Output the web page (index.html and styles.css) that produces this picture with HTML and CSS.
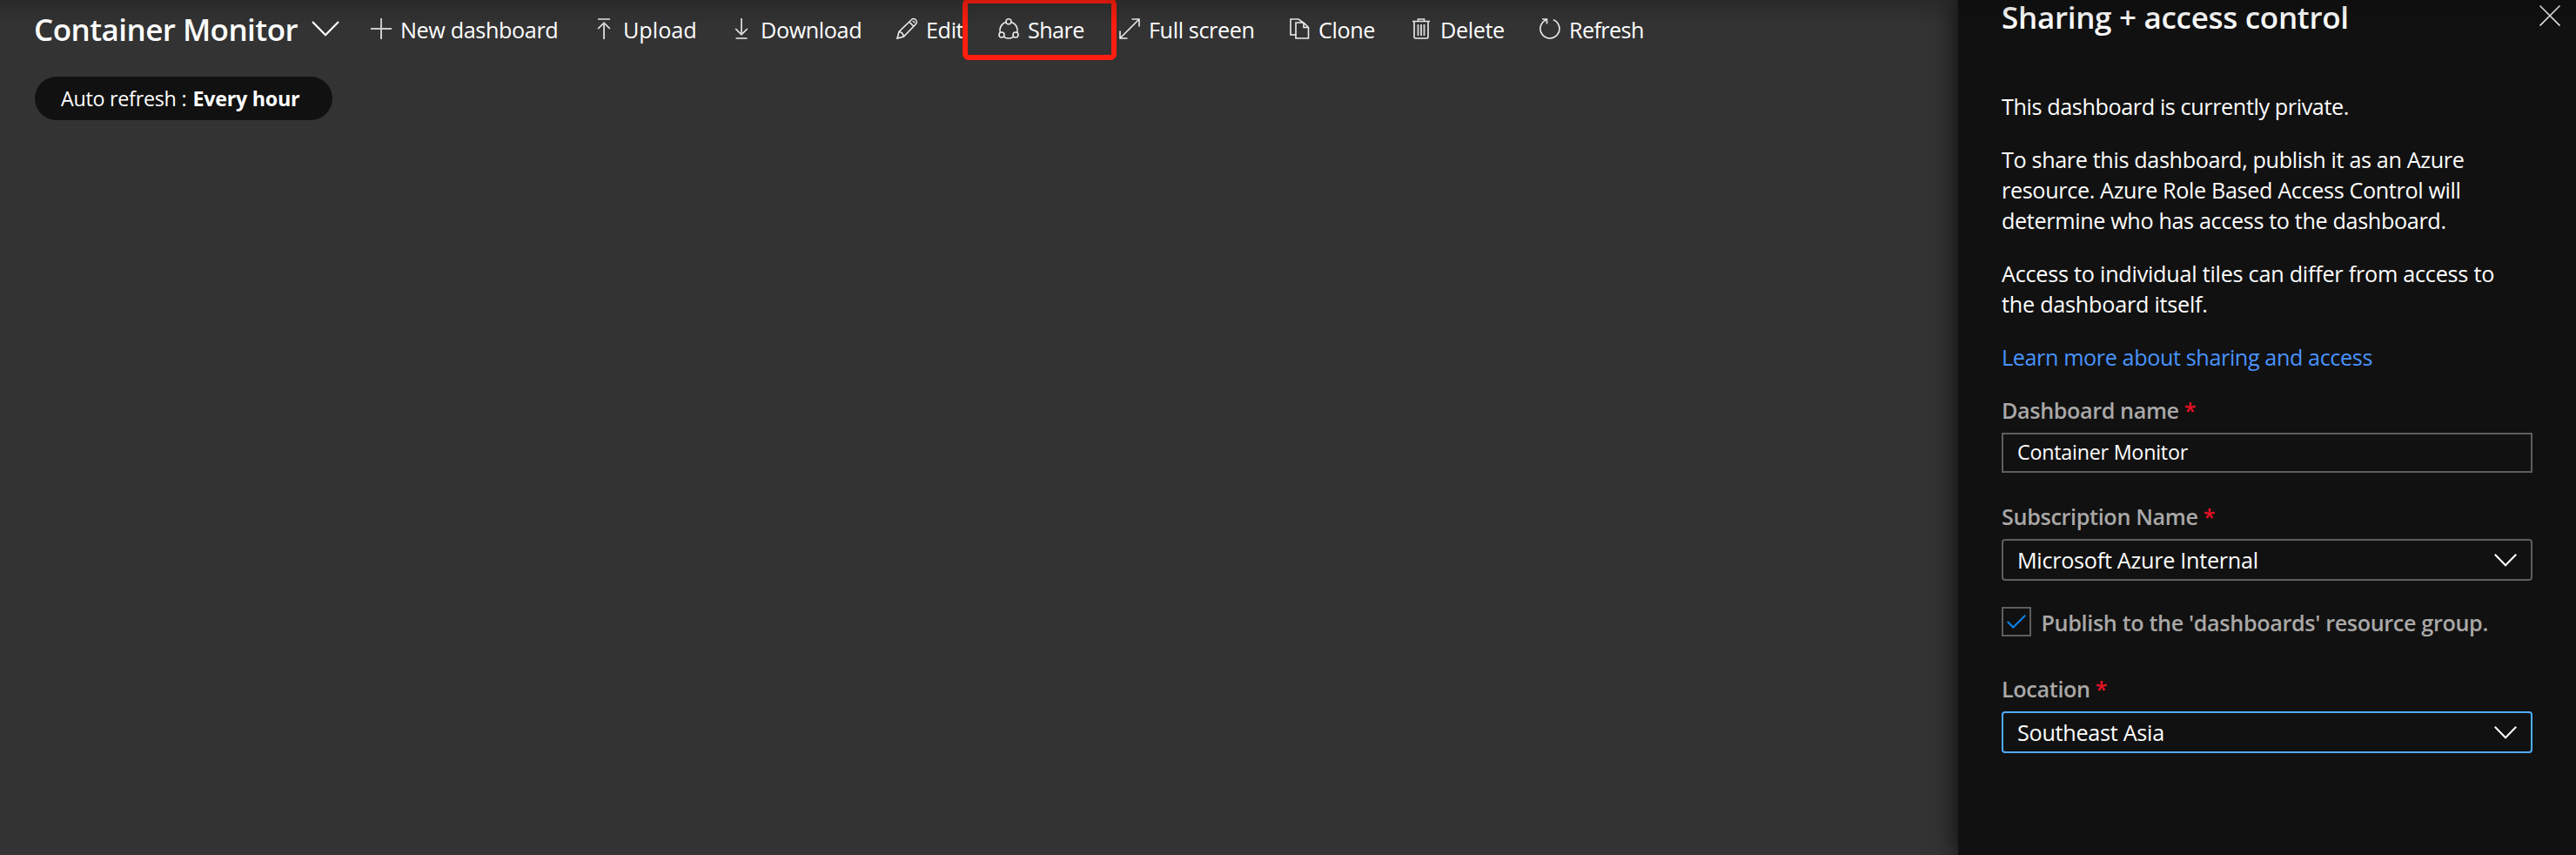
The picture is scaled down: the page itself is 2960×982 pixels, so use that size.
FILE: index.html
```
<!DOCTYPE html>
<html lang="en">
<head>
<meta charset="utf-8">
<title>Container Monitor</title>
<link rel="stylesheet" href="styles.css">
</head>
<body>
<div class="portal">
  <main class="dashboard">
    <header class="topbar">
      <h1 class="title">Container Monitor</h1>
      <svg class="title-chevron" viewBox="0 0 32 18"><path d="M1 1l15 15.200L31 1"/></svg>
      <nav class="toolbar">
        <button class="tool"><svg class="icon soft" viewBox="0 0 24 24"><path d="M12 0v24M0 12h24"/></svg><span>New dashboard</span></button>
        <button class="tool upload"><svg class="icon" viewBox="0 0 24 24"><path d="M5 1h14M5.200 12L12 5.200l6.800 6.800"/><path class="soft" d="M12 5v19"/></svg><span>Upload</span></button>
        <button class="tool"><svg class="icon" viewBox="0 0 24 24"><path d="M5.500 23h13M5.200 12L12 18.800l6.800-6.800"/><path class="soft" d="M12 0v19"/></svg><span>Download</span></button>
        <button class="tool"><svg class="icon" viewBox="0 0 24 24"><path d="M1 23l2-7.500L17.200 1.700a3.600 3.600 0 0 1 5.100 5.100L8.500 21zM3 15.500q4.500.5 5.500 5.500M14.800 4.100l5.100 5.100M18.600 3.200q2 .3 2.300 2.300"/></svg><span>Edit</span></button>
        <button class="tool share"><svg class="icon" viewBox="0 0 24 24"><circle cx="12" cy="3.700" r="3"/><circle cx="4" cy="19" r="3"/><circle cx="20" cy="19" r="3"/><path d="M9 4.200A10.200 10.200 0 0 0 2.200 16.500M15 4.200a10.200 10.200 0 0 1 6.800 12.300M6.700 21.600a11 11 0 0 0 10.600 0"/></svg><span>Share</span></button>
        <button class="tool"><svg class="icon" viewBox="0 0 24 24"><path d="M1 23L23 1M14.500 1H23v8.500M1 14.500V23h8.500"/></svg><span>Full screen</span></button>
        <button class="tool"><svg class="icon" viewBox="0 0 24 24"><path d="M7.500 19H2V1h9l5.500 4M8 5h9l5.500 5.500V23H8zM17 5v5.500h5.500"/></svg><span>Clone</span></button>
        <button class="tool"><svg class="icon" viewBox="0 0 24 24"><path d="M2 3.500h20M8.500 3.500V1h7v2.500M4 3.500v18q0 1.500 1.500 1.500h13q1.500 0 1.500-1.500v-18"/><path class="soft" d="M8.500 7v13M12 7v13M15.500 7v13"/></svg><span>Delete</span></button>
        <button class="tool refresh"><svg class="icon" viewBox="0 0 24 24"><path d="M15.800 1.700A11 11 0 1 1 8 1.700M3 1h5.500v5.500"/></svg><span>Refresh</span></button>
      </nav>
    </header>
    <div class="pill"><span>Auto refresh</span><span class="colon">:</span><b>Every hour</b></div>
  </main>
  <aside class="panel">
    <header class="panel-head">
      <h2 class="panel-title">Sharing + access control</h2>
      <svg class="close" viewBox="0 0 24 24"><path d="M.5.5l23 23M23.500.5l-23 23"/></svg>
    </header>
    <p>This dashboard is currently private.</p>
    <p class="publish">To share this dashboard, publish it as an Azure<br>resource. Azure Role Based Access Control will<br>determine who has access to the dashboard.</p>
    <p class="tiles">Access to individual tiles can differ from access to<br>the dashboard itself.</p>
    <p class="more"><a class="link">Learn more about sharing and access</a></p>
    <div class="field name">
      <label>Dashboard name<i>*</i></label>
      <div class="input">Container Monitor</div>
    </div>
    <div class="field subscription">
      <label>Subscription Name<i>*</i></label>
      <div class="select"><span>Microsoft Azure Internal</span><svg class="chevron" viewBox="0 0 26 15"><path d="M.8.8L13 13.300 25.200.8"/></svg></div>
    </div>
    <div class="check">
      <div class="box"><svg viewBox="0 0 22 16"><path d="M.8 8l6.500 6.500L21.200.8"/></svg></div>
      <span>Publish to the 'dashboards' resource group.</span>
    </div>
    <div class="field location">
      <label>Location<i>*</i></label>
      <div class="select focused"><span>Southeast Asia</span><svg class="chevron" viewBox="0 0 26 15"><path d="M.8.8L13 13.300 25.200.8"/></svg></div>
    </div>
  </aside>
  <div class="top-shade"></div>
</div>
</body>
</html>
```
FILE: styles.css
```
*, *::after { box-sizing: border-box; }
body {
  margin: 0;
  background: #333;
  color: #fff;
  font: 25.2px/35px "Open Sans", "Noto Sans", sans-serif;
  letter-spacing: -0.4px;
}
h1, h2, p { margin: 0; }
svg { display: block; flex: none; fill: none; stroke: #fff; stroke-width: 1.8; overflow: visible; }
span, b, h1, h2, label { white-space: nowrap; }

.portal { display: flex; width: 2960px; height: 982px; position: relative; overflow: hidden; }
.dashboard { flex: 1; padding-left: 40px; }

.topbar { display: flex; align-items: center; height: 68px; margin-left: -1px; }
.title { width: 319px; font-size: 35px; font-weight: 600; line-height: 48px; letter-spacing: -0.54px; }
.title-chevron { width: 32px; height: 18px; margin: 0 36px 2px 0; stroke-width: 2.2; }
.toolbar { display: grid; grid-template-columns: 256px 158px 190px 117px 139px 195px 140px 148px 140px; }
.tool {
  position: relative;
  display: flex;
  align-items: center;
  gap: 10px;
  height: 68px;
  padding: 0;
  border: 0;
  background: none;
  color: inherit;
  font: inherit;
  letter-spacing: -0.38px;
}
.icon { width: 24px; height: 24px; margin-bottom: 2px; stroke: #eee; stroke-width: 1.6; }
.soft { stroke: #ccc; stroke-width: 2; }
.upload { letter-spacing: 0; }
.refresh, .share { letter-spacing: -0.6px; }
.share::after {
  content: "";
  position: absolute;
  left: -41px;
  top: -2px;
  width: 177px;
  height: 71px;
  border: 6.500px solid #ff1e0f;
  border-radius: 7px;
}

.pill {
  display: flex;
  align-items: center;
  width: 342px;
  height: 50px;
  margin-top: 20px;
  padding-left: 30px;
  border-radius: 25px;
  background: #111;
  font-size: 23.300px;
  letter-spacing: -0.27px;
}
.colon { margin: 0 7px 0 6px; }

.panel {
  position: relative;
  width: 710px;
  padding: 0 50px;
  background: #111;
  box-shadow: 0 0 27px rgba(0, 0, 0, .85);
}
.panel-head { display: flex; justify-content: space-between; height: 105px; margin-right: -32px; }
.panel-title { margin-top: -5px; font-size: 35px; font-weight: 600; line-height: 49px; letter-spacing: -0.3px; }
.close { width: 24px; height: 24px; margin-top: 6px; stroke: #eee; stroke-width: 1.7; }
.panel p { margin-bottom: 26px; line-height: 34.900px; }
.panel .publish { letter-spacing: -0.36px; }
.panel .tiles { margin-bottom: 27px; letter-spacing: -0.24px; }
.link { color: #4894fe; }

label { display: block; color: #a9a8a7; font-weight: 600; }
label i { margin-left: 6px; color: #e81123; font-style: normal; }
.name label { margin-bottom: 8px; }
.subscription label, .location label { margin-bottom: 8px; letter-spacing: -0.35px; }
.subscription { margin-top: 33px; }
.location { margin-top: 43px; }
.input, .select { display: flex; align-items: center; width: 610px; border: 2px solid #605e5c; }
.input { height: 46px; padding: 0 16px 2px; font-size: 23.300px; letter-spacing: -0.24px; }
.select { justify-content: space-between; height: 48px; padding: 0 16px; border-radius: 4px; letter-spacing: -0.28px; }
.focused { border-color: #4fabfb; }
.chevron { width: 26px; height: 15px; margin-top: 1px; stroke-width: 2; }

.check { display: flex; align-items: center; gap: 11.500px; margin-top: 30px; height: 34px; color: #a9a8a7; font-weight: 600; letter-spacing: -0.36px; }
.check span { padding-top: 2px; }
.box { display: flex; align-items: center; justify-content: center; width: 34px; height: 34px; border: 2px solid #605e5c; }
.box svg { width: 22px; height: 16px; margin-bottom: 1px; stroke: #0a84f0; stroke-width: 2; }

.top-shade { position: absolute; inset: 0 0 auto; height: 30px; background: linear-gradient(rgba(0, 0, 0, .18), transparent); }
```
